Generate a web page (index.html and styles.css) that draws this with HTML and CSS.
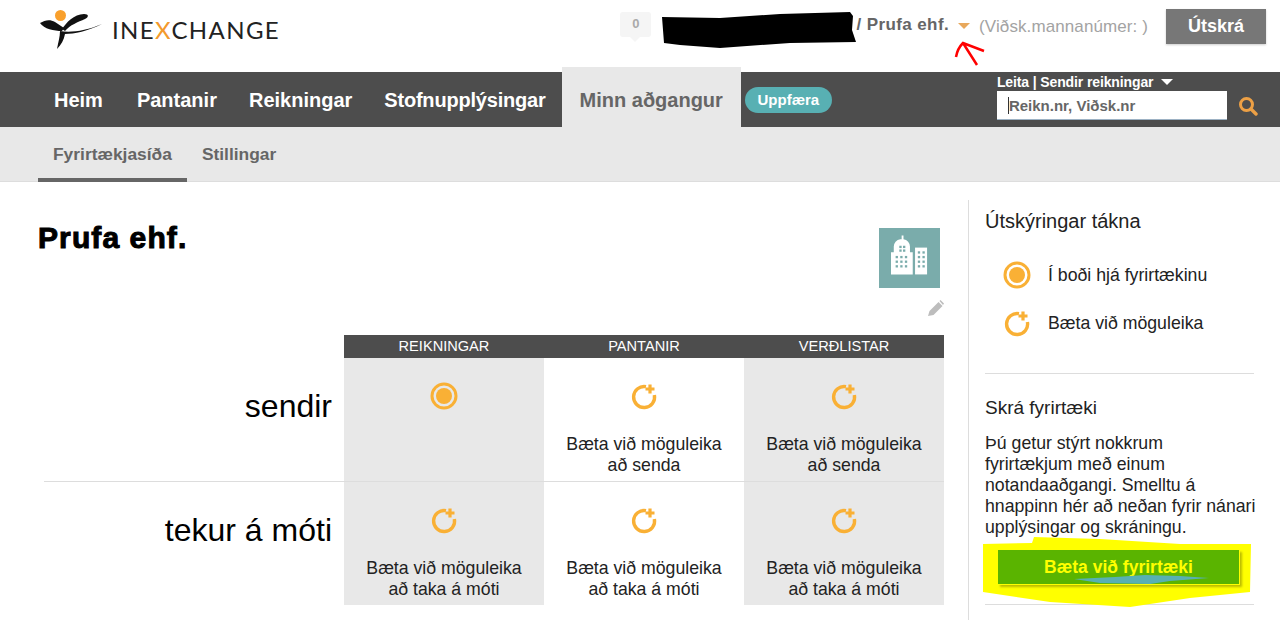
FILE: index.html
```html
<!DOCTYPE html>
<html lang="is">
<head>
    <meta charset="UTF-8">
    <title>InExchange</title>
    <link rel="stylesheet" href="styles.css">
</head>
<body>
    <svg class="defs" width="0" height="0">
        <symbol id="icon-on" viewBox="0 0 28 28">
            <circle cx="14" cy="14" r="12" fill="none" stroke="#f9b035" stroke-width="3"/>
            <circle cx="14" cy="14" r="8" fill="#f9b035"/>
        </symbol>
        <symbol id="icon-add" viewBox="0 0 28 28">
            <path d="M16 4.700A10.500 10.500 0 1 0 24.400 13" fill="none" stroke="#f9b035" stroke-width="3.400"/>
            <path d="M20 2.500v9M15.500 7h9" stroke="#f9b035" stroke-width="3.200"/>
        </symbol>
    </svg>

    <header class="top">
        <a class="logo">
            <svg class="logo-mark" width="72" height="40" viewBox="0 0 72 40">
                <circle cx="20.500" cy="5.500" r="5.500" fill="#f9a02c"/>
                <path d="M0 13C5 10 10 9 15 12C18 14 21 16 24 18L22 21C14 21 4 19 0 13Z" fill="#111"/>
                <path d="M22 19C26 13 34 4 44 4C49 4 49 7 45 9C38 12 30 15 25 21Z" fill="#111"/>
                <path d="M20 21C30 23 46 21 62 14C48 21 34 24 25 24C24 30 21 35 17 39C18 33 20 27 20 21Z" fill="#111"/>
            </svg>
            <span class="logo-text">INE<span class="logo-x">X</span>CHANGE</span>
        </a>
        <div class="top-right">
            <span class="bubble">0</span>
            <span class="user-name">/ Prufa ehf.</span>
            <span class="caret"></span>
            <span class="user-number">(Viðsk.mannanúmer: )</span>
            <button class="logout">Útskrá</button>
        </div>
    </header>

    <nav class="mainnav">
        <a class="home">Heim</a>
        <a>Pantanir</a>
        <a>Reikningar</a>
        <a class="info">Stofnupplýsingar</a>
        <a class="active">Minn aðgangur</a>
        <span class="update">Uppfæra</span>
        <div class="search">
            <div class="search-label">Leita | Sendir reikningar <span class="caret-white"></span></div>
            <div class="search-row">
                <div class="search-input"><span class="cursor">Reikn.nr, Viðsk.nr</span></div>
                <svg width="20" height="20" viewBox="0 0 20 20">
                    <circle cx="8.500" cy="8.500" r="6" fill="none" stroke="#eda045" stroke-width="3"/>
                    <path d="M13 13l5 5" stroke="#eda045" stroke-width="3.400" stroke-linecap="round"/>
                </svg>
            </div>
        </div>
    </nav>

    <nav class="subnav">
        <a class="active">Fyrirtækjasíða</a>
        <a>Stillingar</a>
    </nav>

    <div class="page">
        <main class="content">
            <div class="company">
                <h1>Prufa ehf.</h1>
                <div class="company-side">
                    <div class="company-icon">
                        <svg width="37" height="40" viewBox="0 0 40 42" fill="#fff">
                            <path d="M11.500 0h2v4a8 8 0 0 1 7 8v6h3v24H0V18h3v-6a8 8 0 0 1 7-8h1.500z"/>
                            <rect x="26" y="13" width="13" height="29"/>
                            <g fill="#7aacab">
                                <rect x="9" y="11" width="2.500" height="2.500"/><rect x="13" y="11" width="2.500" height="2.500"/>
                                <rect x="9" y="15" width="2.500" height="2.500"/><rect x="13" y="15" width="2.500" height="2.500"/>
                                <rect x="5" y="22" width="2.500" height="2.500"/><rect x="10" y="22" width="2.500" height="2.500"/><rect x="15" y="22" width="2.500" height="2.500"/>
                                <rect x="5" y="27" width="2.500" height="2.500"/><rect x="10" y="27" width="2.500" height="2.500"/><rect x="15" y="27" width="2.500" height="2.500"/>
                                <rect x="5" y="32" width="2.500" height="2.500"/><rect x="10" y="32" width="2.500" height="2.500"/><rect x="15" y="32" width="2.500" height="2.500"/>
                                <rect x="29" y="17" width="2.500" height="2.500"/><rect x="34" y="17" width="2.500" height="2.500"/>
                                <rect x="29" y="22" width="2.500" height="2.500"/><rect x="34" y="22" width="2.500" height="2.500"/>
                                <rect x="29" y="27" width="2.500" height="2.500"/><rect x="34" y="27" width="2.500" height="2.500"/>
                                <rect x="29" y="32" width="2.500" height="2.500"/><rect x="34" y="32" width="2.500" height="2.500"/>
                            </g>
                        </svg>
                    </div>
                    <svg class="pencil" width="16" height="16" viewBox="0 0 16 16">
                        <path d="M0 16l1.500-5L10.500 2l4 4L5.500 15zM11.500 1l1-1 3.500 3.500-1 1.500z" fill="#bdbdbd"/>
                    </svg>
                </div>
            </div>

            <div class="matrix">
                <div class="matrix-head">
                    <div></div>
                    <div class="head-cell">REIKNINGAR</div>
                    <div class="head-cell">PANTANIR</div>
                    <div class="head-cell">VERÐLISTAR</div>
                </div>
                <div class="matrix-row">
                    <div class="row-label">sendir</div>
                    <div class="cell grey"><svg class="cell-icon"><use href="#icon-on"/></svg></div>
                    <div class="cell"><svg class="cell-icon"><use href="#icon-add"/></svg><p>Bæta við möguleika<br>að senda</p></div>
                    <div class="cell grey"><svg class="cell-icon"><use href="#icon-add"/></svg><p>Bæta við möguleika<br>að senda</p></div>
                </div>
                <div class="matrix-row second">
                    <div class="row-label">tekur á móti</div>
                    <div class="cell grey"><svg class="cell-icon"><use href="#icon-add"/></svg><p>Bæta við möguleika<br>að taka á móti</p></div>
                    <div class="cell"><svg class="cell-icon"><use href="#icon-add"/></svg><p>Bæta við möguleika<br>að taka á móti</p></div>
                    <div class="cell grey"><svg class="cell-icon"><use href="#icon-add"/></svg><p>Bæta við möguleika<br>að taka á móti</p></div>
                </div>
            </div>
        </main>

        <aside class="sidebar">
            <section class="legend">
                <h2>Útskýringar tákna</h2>
                <div class="legend-row"><svg class="legend-icon"><use href="#icon-on"/></svg>Í boði hjá fyrirtækinu</div>
                <div class="legend-row"><svg class="legend-icon"><use href="#icon-add"/></svg>Bæta við möguleika</div>
            </section>
            <section class="register">
                <h3>Skrá fyrirtæki</h3>
                <p>Þú getur stýrt nokkrum<br>fyrirtækjum með einum<br>notandaaðgangi. Smelltu á<br>hnappinn hér að neðan fyrir nánari<br>upplýsingar og skráningu.</p>
                <button class="add-company">Bæta við fyrirtæki</button>
            </section>
        </aside>
    </div>

    <!-- merkingar sem voru teiknaðar ofan á skjámyndina -->
    <svg class="scribble" width="1280" height="620" viewBox="0 0 1280 620">
        <path d="M662 17L720 18L780 14L850 12L853 16L852 30L856 42L790 43L720 48L680 45L664 43Z" fill="#000"/>
        <path d="M956 57C957 51 960 46 963 43L984 51M963 43L977 65" stroke="#f00" stroke-width="2.500" fill="none"/>
        <path d="M983 544L1032 543L1034 537L1100 539L1180 544L1251 544L1250 592L1190 598L1130 607L1050 602L983 592Z" fill="#ff0"/>
    </svg>
    <svg class="scribble over" width="1280" height="620" viewBox="0 0 1280 620">
        <path d="M1074 579L1115 577L1145 575L1180 576L1209 578L1170 581L1150 584L1100 583Z" fill="#58b0b3"/>
    </svg>
</body>
</html>
```

FILE: styles.css
```css
* {
    box-sizing: border-box;
}

body {
    margin: 0;
    height: 620px;
    overflow: hidden;
    position: relative;
    font-family: "Liberation Sans", Arial, sans-serif;
    color: #000;
    background: #fff;
}

.defs {
    position: absolute;
}

/* haus */
.top {
    height: 72px;
    display: flex;
    justify-content: space-between;
    padding: 9px 14px 0 40px;
}

.logo {
    display: flex;
    align-items: flex-start;
}

.logo-mark {
    margin-top: 1px;
}

.logo-text {
    margin: 6px 0 0 0;
    font-family: Lato, sans-serif;
    font-weight: 400;
    font-size: 24px;
    letter-spacing: 1.4px;
    color: #222;
}

.logo-x {
    color: #f39a2c;
}

.top-right {
    display: flex;
    align-items: flex-start;
    font-size: 17px;
}

.bubble {
    width: 31px;
    height: 25px;
    margin: 3px 0 0 0;
    background: #f5f5f5;
    border-radius: 3px;
    color: #aaa;
    font-size: 13px;
    font-weight: bold;
    text-align: center;
    line-height: 24px;
    position: relative;
}

.bubble::after {
    content: "";
    position: absolute;
    left: 10px;
    top: 25px;
    border: 5px solid transparent;
    border-top-color: #f5f5f5;
}

.user-name {
    margin: 6px 0 0 205px;
    font-weight: bold;
    color: #666;
    letter-spacing: 0.4px;
}

.caret {
    width: 0;
    height: 0;
    margin: 14px 0 0 9px;
    border: 6.500px solid transparent;
    border-top: 6px solid #e8a85c;
    border-bottom: 0;
}

.user-number {
    margin: 8px 0 0 9px;
    color: #a3a3a3;
    letter-spacing: 0.1px;
}

.logout {
    width: 100px;
    height: 35px;
    margin: 0 0 0 18px;
    border: 0;
    background: #777;
    color: #fff;
    font: bold 18px "Liberation Sans", Arial, sans-serif;
    box-shadow: 0 1px 2px rgba(0, 0, 0, 0.2);
}

/* adalvalmynd */
.mainnav {
    height: 55px;
    background: #4d4d4d;
    display: flex;
    align-items: center;
    padding-left: 38px;
    position: relative;
}

.mainnav a {
    padding: 0 16px;
    color: #fff;
    font-size: 20px;
    font-weight: bold;
    line-height: 56px;
    white-space: nowrap;
}

.mainnav a.home {
    margin-right: 2px;
}

.mainnav a.info {
    letter-spacing: -0.2px;
}

.mainnav a.active {
    height: 60px;
    margin: -5px 0 0 0;
    padding: 0 18px;
    background: #e8e8e8;
    color: #666;
    line-height: 66px;
}

.update {
    width: 87px;
    height: 26px;
    margin: 0 0 0 4px;
    border-radius: 13px;
    background: #58b0b3;
    color: #fff;
    font-size: 15px;
    font-weight: bold;
    line-height: 26px;
    text-align: center;
}

.search {
    align-self: flex-start;
    margin: 3px 0 0 165px;
}

.search-label {
    color: #fff;
    font-size: 14px;
    font-weight: bold;
    letter-spacing: -0.12px;
    line-height: 15px;
}

.caret-white {
    display: inline-block;
    margin: 0 0 2px 4px;
    border: 6px solid transparent;
    border-top: 6px solid #fff;
    border-bottom: 0;
}

.search-row {
    display: flex;
    align-items: center;
    gap: 11px;
    margin-top: 1px;
}

.search-input {
    width: 230px;
    height: 29px;
    padding: 0 0 0 11px;
    background: #fff;
    border-bottom: 1px solid #9db2c4;
    color: #666;
    font-size: 15px;
    font-weight: bold;
    line-height: 29px;
}

.cursor {
    border-left: 1px solid #333;
}

.subnav {
    height: 55px;
    background: #e8e8e8;
    border-bottom: 1px solid #ddd;
    display: flex;
    padding-left: 38px;
}

.subnav a {
    height: 55px;
    padding: 0 15px;
    color: #666;
    font-size: 17.400px;
    font-weight: bold;
    line-height: 54px;
}

.subnav a.active {
    border-bottom: 4px solid #666;
}

/* innihald */
.page {
    display: flex;
    padding-top: 18px;
}

.content {
    width: 968px;
    padding: 0 24px 0 44px;
}

.company {
    display: flex;
    justify-content: space-between;
    height: 135px;
    margin-left: -6px;
}

h1 {
    margin: 21px 0 0 0;
    font-size: 30px;
    font-weight: bold;
    letter-spacing: 1.100px;
    -webkit-text-stroke: 1px #000;
}

.company-side {
    width: 65px;
    padding-top: 28px;
    display: flex;
    flex-direction: column;
    align-items: flex-start;
}

.company-icon {
    width: 61px;
    height: 60px;
    padding-bottom: 6px;
    background: #7aacab;
    display: flex;
    align-items: center;
    justify-content: center;
}

.pencil {
    margin: 12px 0 0 49px;
}

.matrix-head,
.matrix-row {
    display: grid;
    grid-template-columns: 300px 200px 200px 200px;
}

.head-cell {
    height: 23px;
    background: #4d4d4d;
    color: #fff;
    font-size: 14.600px;
    line-height: 23px;
    text-align: center;
}

.matrix-row {
    height: 123px;
}

.matrix-row.second {
    height: 124px;
    border-top: 1px solid #ddd;
}

.row-label {
    padding: 28px 12px 0 0;
    font-size: 32px;
    line-height: 40px;
    text-align: right;
}

.cell {
    padding-top: 24px;
    text-align: center;
}

.cell.grey {
    background: #e8e8e8;
}

.cell-icon {
    display: block;
    width: 28px;
    height: 28px;
    margin: 0 auto;
}

.cell p {
    margin: 24px 0 0 0;
    font-size: 17.700px;
    line-height: 21px;
    color: #222;
}

/* hlidarstika */
.sidebar {
    width: 286px;
    height: 420px;
    border-left: 1px solid #ddd;
    padding-left: 16px;
    color: #222;
}

.legend {
    width: 269px;
    height: 174px;
    padding-top: 9px;
    border-bottom: 1px solid #ddd;
}

h2 {
    margin: 0 0 18px 0;
    font-size: 20px;
    font-weight: normal;
    line-height: 24px;
}

.legend-row {
    display: flex;
    align-items: center;
    height: 48px;
    padding-left: 18px;
    font-size: 17.700px;
    gap: 17px;
}

.legend-icon {
    width: 28px;
    height: 28px;
}

.register {
    width: 269px;
    height: 231px;
    padding-top: 23px;
    border-bottom: 1px solid #ddd;
}

h3 {
    margin: 0 0 14px 0;
    font-size: 19px;
    font-weight: normal;
    line-height: 22px;
}

.register p {
    margin: 0;
    font-size: 17.700px;
    line-height: 21px;
    white-space: nowrap;
}

.add-company {
    display: block;
    position: relative;
    z-index: 2;
    width: 242px;
    height: 35px;
    margin: 12px 0 0 13px;
    border: 0;
    border-right: 1px solid #ff0;
    border-bottom: 1px solid #ff0;
    background: #5ab400;
    color: #ff0;
    font: bold 17.500px "Liberation Sans", Arial, sans-serif;
    box-shadow: 2px 2px 2px rgba(90, 90, 0, 0.4);
}

/* merkingar ofan a */
.scribble {
    position: absolute;
    left: 0;
    top: 0;
    z-index: 1;
    pointer-events: none;
}

.scribble.over {
    z-index: 3;
}
```
